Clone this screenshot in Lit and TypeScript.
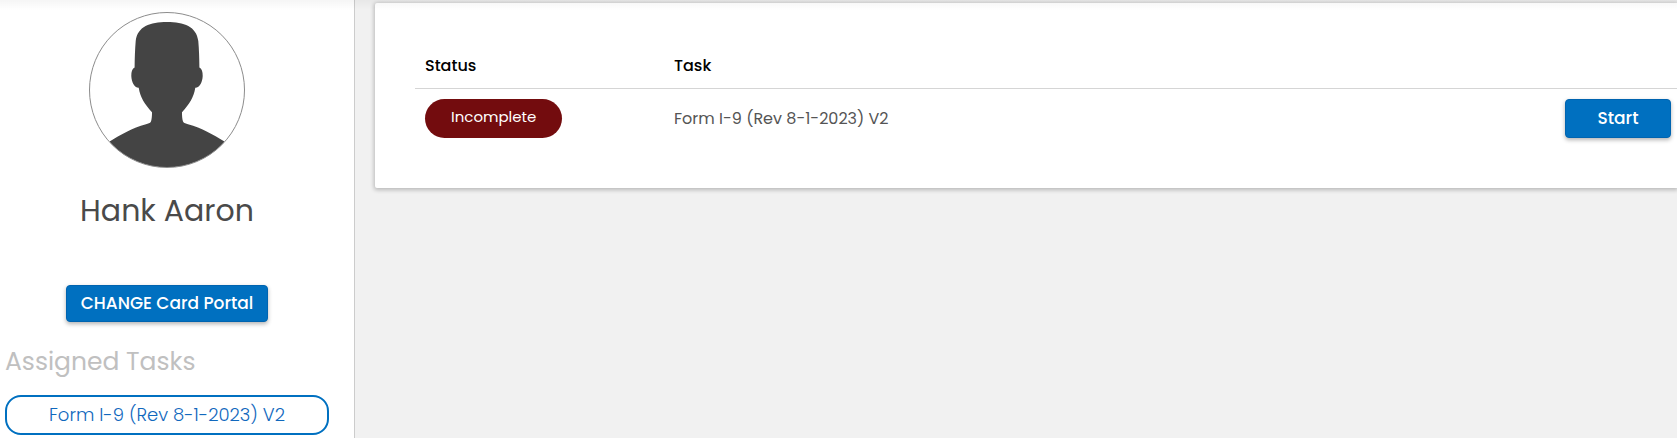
import { LitElement, html, css } from "lit";
import { customElement, property } from "lit/decorators.js";

interface Task {
  status: string;
  name: string;
}

const TASKS: Task[] = [{ status: "Incomplete", name: "Form I-9 (Rev 8-1-2023) V2" }];

@customElement("user-avatar")
class UserAvatar extends LitElement {
  static styles = css`
    :host {
      display: block;
      width: 156px;
      height: 156px;
    }
    svg {
      display: block;
      width: 100%;
      height: 100%;
    }
  `;

  render() {
    return html`<svg viewBox="0 0 156 156" role="img" aria-label="Profile picture">
      <defs>
        <clipPath id="disc"><circle cx="78" cy="78" r="77.5" /></clipPath>
      </defs>
      <path
        clip-path="url(#disc)"
        fill="#444"
        d="M78 10C61 10 48.500 14.500 46.700 29C46 37 45.700 46 45.600 55.600C43 57 42.300 60 42.300 64C42.600 70 45 75.500 49.700 75.800C51.500 86 55.500 92 63 100.300C63 104 62.800 107 62 109.500C61 111.500 59 111.600 57 112.200C43 116 32 122.500 21 129.300L21 155H135L135 129.300C124 122.500 113 116 99 112.200C97 111.600 95 111.500 94 109.500C93.200 107 93 104 93 100.300C100.500 92 104.500 86 106.300 75.800C111 75.500 113.400 70 113.700 64C113.700 60 113 57 110.400 55.600C110.300 46 110 37 109.300 29C107.500 14.500 95 10 78 10Z"
      />
      <circle cx="78" cy="78" r="77.5" fill="none" stroke="#8c8c8c" stroke-width="1" />
    </svg>`;
  }
}

@customElement("profile-sidebar")
class ProfileSidebar extends LitElement {
  @property() name = "";
  @property({ attribute: false }) tasks: Task[] = [];

  static styles = css`
    :host {
      display: flex;
      flex-direction: column;
      box-sizing: border-box;
      padding: 12px 25px 3px 5px;
      border-right: 1px solid #ccc;
      background: #fff;
    }
    .profile {
      display: flex;
      flex-direction: column;
      align-items: center;
    }
    .name {
      margin: 20px 0 51px;
      font-size: 30px;
      line-height: 46px;
      font-weight: 400;
      color: #4a4a4a;
    }
    .portal {
      height: 37px;
      padding: 0 14px 2px;
      border: 1px solid #0064b0;
      border-radius: 4px;
      background: #0070c0;
      box-shadow: 0 2px 4px rgba(0, 0, 0, 0.3);
      color: #fff;
      font: inherit;
      font-size: 17px;
      font-weight: 500;
      cursor: pointer;
    }
    .heading {
      margin: 20px 0 14px;
      font-size: 25px;
      line-height: 39px;
      font-weight: 400;
      color: #c0c0c0;
    }
    .list {
      margin: 0;
      padding: 0;
      list-style: none;
    }
    .task {
      display: block;
      padding: 0 16px;
      border: 2px solid #0070c0;
      border-radius: 16px;
      color: #1168bd;
      font-size: 18px;
      line-height: 36px;
      font-weight: 300;
      text-align: center;
      text-decoration: none;
    }
  `;

  render() {
    return html`
      <div class="profile">
        <user-avatar></user-avatar>
        <h1 class="name">${this.name}</h1>
        <button class="portal" type="button">CHANGE Card Portal</button>
      </div>
      <h2 class="heading">Assigned Tasks</h2>
      <ul class="list">
        ${this.tasks.map((t) => html`<li><a class="task" href="#">${t.name}</a></li>`)}
      </ul>
    `;
  }
}

@customElement("task-table")
class TaskTable extends LitElement {
  @property({ attribute: false }) tasks: Task[] = [];

  static styles = css`
    :host {
      display: block;
      padding: 40px 0 40px 40px;
      border-radius: 2px 0 0 2px;
      background: #fff;
      box-shadow: 0 1px 4px 1px rgba(0, 0, 0, 0.24);
    }
    .table {
      width: 100%;
      border-collapse: separate;
      border-spacing: 0;
      table-layout: fixed;
    }
    .head {
      padding: 10px;
      border-bottom: 1px solid #d5d5d5;
      color: #000;
      font-size: 16px;
      line-height: 25px;
      font-weight: 500;
      text-align: left;
    }
    .status {
      width: 229px;
    }
    .cell {
      padding: 10px;
      color: #555;
      font-size: 16px;
      font-weight: 400;
    }
    .action {
      padding-right: 6px;
      text-align: right;
    }
    .badge {
      display: block;
      width: fit-content;
      padding: 0 26px 4px;
      border-radius: 20px;
      background: #730c0e;
      color: #fff;
      font-size: 15px;
      line-height: 35px;
      font-weight: 400;
    }
    .start {
      height: 39px;
      min-width: 106px;
      padding: 0 12px 2px;
      border: 1px solid #0064b0;
      border-radius: 4px;
      background: #0070c0;
      box-shadow: 0 2px 4px rgba(0, 0, 0, 0.3);
      color: #fff;
      font: inherit;
      font-size: 17px;
      font-weight: 500;
      vertical-align: top;
      cursor: pointer;
    }
  `;

  render() {
    return html`
      <table class="table">
        <thead>
          <tr>
            <th class="head status" scope="col">Status</th>
            <th class="head" scope="col">Task</th>
            <td class="head"></td>
          </tr>
        </thead>
        <tbody>
          ${this.tasks.map(
            (t) => html`<tr>
              <td class="cell"><span class="badge">${t.status}</span></td>
              <td class="cell">${t.name}</td>
              <td class="cell action"><button class="start" type="button">Start</button></td>
            </tr>`
          )}
        </tbody>
      </table>
    `;
  }
}

@customElement("app-root")
class AppRoot extends LitElement {
  static styles = css`
    :host {
      display: grid;
      grid-template-columns: 355px minmax(0, 1fr);
      position: relative;
      min-height: 100vh;
      background: #f1f1f1;
      font-family: Poppins, Inter, sans-serif;
    }
    :host::before {
      content: "";
      position: absolute;
      inset: 0 0 auto 0;
      height: 10px;
      background: linear-gradient(rgba(0, 0, 0, 0.04), rgba(0, 0, 0, 0));
      pointer-events: none;
    }
    .content {
      padding: 3px 0 20px 20px;
      overflow: hidden;
    }
  `;

  render() {
    return html`
      <profile-sidebar .name=${"Hank Aaron"} .tasks=${TASKS}></profile-sidebar>
      <main class="content"><task-table .tasks=${TASKS}></task-table></main>
    `;
  }
}
